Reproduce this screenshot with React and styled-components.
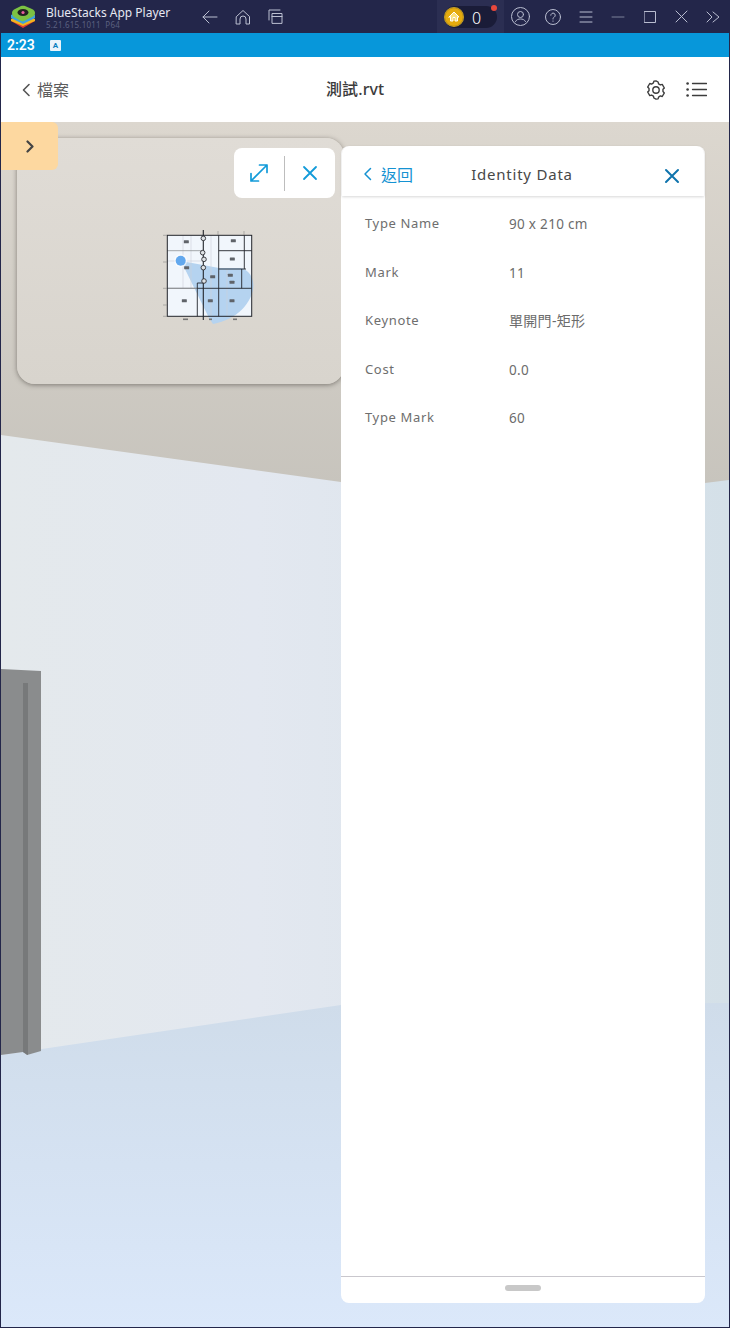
import React from "react";
import styled, { createGlobalStyle } from "styled-components";

const Global = createGlobalStyle`
  html, body { margin: 0; padding: 0; background: #23264a; }
  #root { width: 730px; height: 1328px; }
  * { box-sizing: border-box; }
`;
const sans = `"Noto Sans", "Noto Sans CJK TC", sans-serif`;

const Shell = styled.div`
  width: 730px; height: 1328px; display: flex; flex-direction: column;
  background: #23264a; padding: 0 1px 1px 1px; overflow: hidden; font-family: ${sans};
`;
const TitleBar = styled.header`
  height: 33px; flex: none; display: flex; align-items: center; color: #fff;
`;
const Logo = styled.svg`width: 26px; height: 24px; margin-left: 9px; flex: none;`;
const Brand = styled.div`
  margin-left: 10px; width: 156px; display: flex; flex-direction: column; flex: none;
`;
const BrandName = styled.span`
  font: 12px/14px "Noto Sans", sans-serif; color: #e6e8f2; margin-top: 3px; white-space: nowrap;
`;
const BrandVersion = styled.span`
  font: 8px/10px "Noto Sans", sans-serif; color: #5b6080; letter-spacing: .2px; white-space: pre;
`;
const NavIcons = styled.div`display: flex; gap: 17px; align-items: center; color: #bcc0d2;`;
const Svg = styled.svg`
  flex: none; display: block; fill: none; stroke: currentColor;
  stroke-linecap: round; stroke-linejoin: round;
`;
const CoinWrap = styled.div`
  position: relative; margin-left: 154px; width: 67px; height: 33px; background: #2b2e52;
  display: flex; align-items: center; padding-left: 7px; flex: none;
`;
const CoinPill = styled.div`
  width: 53px; height: 22px; border-radius: 11px; background: #1a1c38;
  display: flex; align-items: center; gap: 8px;
`;
const Coin = styled.div`
  width: 20px; height: 20px; border-radius: 50%; flex: none;
  background: radial-gradient(circle at 50% 50%, #e5ab0e 0 58%, #b98c14 64%, #e8c537 72%, #dcb02a 100%);
  display: flex; align-items: center; justify-content: center;
`;
const CoinCount = styled.span`font: 300 16px/18px "Noto Sans", sans-serif; color: #fff; margin-top: 2px;`;
const RedDot = styled.span`
  position: absolute; top: 5px; left: 54px; width: 6px; height: 6px; border-radius: 50%; background: #e8483c;
`;
const WinIcons = styled.div`
  display: flex; align-items: center; color: #b9bdd0; margin-left: 3px;
`;
const IconCell = styled.div`
  width: ${p => p.$w}px; display: flex; justify-content: center;
`;

const StatusBar = styled.div`
  height: 24px; flex: none; background: #0797da; display: flex; align-items: center;
  padding-left: 6px; gap: 15px; color: #fff;
`;
const Clock = styled.span`font: 600 14px/16px "Roboto", sans-serif;`;
const StatusBadge = styled.span`
  width: 11px; height: 11px; background: #e9f4fb; color: #0a7fc0; border-radius: 1px;
  font: 700 8px/11px "Roboto", sans-serif; text-align: center;
`;

const AppBar = styled.div`
  height: 65px; flex: none; background: #fff; display: grid;
  grid-template-columns: 305px auto 1fr; align-items: center; padding: 0 22px 0 20px;
`;
const Back = styled.div`display: flex; align-items: center; gap: 6px; color: #555;`;
const BackLabel = styled.span`font: 16px/20px "Noto Sans CJK TC", sans-serif; color: #5c5c5c; margin-bottom: 1px;`;
const FileName = styled.h1`
  margin: 0 0 1px; font: 500 16px/20px "Noto Sans", "Noto Sans CJK TC", sans-serif; color: #3c3c3c; letter-spacing: .1px;
`;
const AppTools = styled.div`
  display: flex; justify-content: flex-end; align-items: center; gap: 19px; color: #3c3c3c;
`;

const Viewport = styled.main`position: relative; flex: 1; overflow: hidden;`;
const Scene = styled.svg`position: absolute; inset: 0; width: 100%; height: 100%; display: block;`;

const MiniMap = styled.section`
  position: absolute; left: 16px; top: 16px; width: 327px; height: 246px;
  background: linear-gradient(180deg, #e0dcd6, #d8d4cd);
  border-radius: 6px 18px 18px 18px;
  box-shadow: 0 1px 5px rgba(60,55,50,.55);
`;
const PlanSvg = styled.svg`position: absolute; left: 144px; top: 92px; width: 100px; height: 100px;`;
const SideTab = styled.button`
  position: absolute; left: 0; top: 0; width: 57px; height: 48px; border: 0; padding: 0;
  background: #fdd8a0; border-radius: 0 6px 6px 0; color: #444;
  display: flex; align-items: center; justify-content: center;
`;
const MapTools = styled.div`
  position: absolute; left: 233px; top: 26px; width: 101px; height: 50px; background: #fff;
  border-radius: 8px; display: flex; align-items: center; color: #129bd9;
`;
const MapTool = styled.div`flex: 1; display: flex; align-items: center; justify-content: center;`;
const MapDivider = styled.span`width: 1px; height: 35px; background: #bdbdbd; flex: none;`;

const Panel = styled.aside`
  position: absolute; left: 340px; top: 24px; width: 364px; height: 1157px; background: #fff;
  border-radius: 8px; display: flex; flex-direction: column;
`;
const PanelHead = styled.div`
  height: 50px; flex: none; display: grid; grid-template-columns: 1fr auto 1fr; align-items: center;
  padding: 5px 24px 0 21px; margin: 0 1px; box-shadow: 0 1px 3px rgba(0,0,0,.16); border-radius: 8px 8px 0 0;
`;
const PanelBack = styled.div`display: flex; align-items: center; gap: 9px; color: #1592d2;`;
const PanelBackLabel = styled.span`font: 16px/20px "Noto Sans CJK TC", sans-serif; color: #1592d2;`;
const PanelTitle = styled.h2`
  margin: 0 0 0 1px; font: 400 15px/20px "Noto Sans", sans-serif; color: #484848; letter-spacing: .78px;
`;
const PanelClose = styled.div`display: flex; justify-content: flex-end; color: #0f74ad; margin-top: 5px;`;
const Rows = styled.dl`margin: 0; flex: 1; padding: 17px 0 0 24px; display: flex; flex-direction: column;`;
const Row = styled.div`height: 48.5px; display: grid; grid-template-columns: 144px 1fr;`;
const Key = styled.dt`font: 13px/20px "Noto Sans", sans-serif; color: #6e6e6e; letter-spacing: .65px;`;
const Value = styled.dd`
  margin: 1px 0 0; font: ${p => (p.$cjk ? 14 : 13.5)}px/20px "Noto Sans", "Noto Sans CJK TC", sans-serif;
  color: #6c6c6c; letter-spacing: .3px;
`;
const PanelFoot = styled.div`
  height: 27px; flex: none; border-top: 1px solid #c9c7cd; display: flex; align-items: center; justify-content: center;
`;
const Handle = styled.span`width: 36px; height: 6px; border-radius: 3px; background: #c8c8c8; margin-bottom: 5px;`;

const rows = [
  ["Type Name", "90 x 210 cm"],
  ["Mark", "11"],
  ["Keynote", "單開門-矩形", true],
  ["Cost", "0.0"],
  ["Type Mark", "60"],
];

const labels = [[109, 65], [250, 62], [247, 117], [110, 143], [188, 170], [241, 166], [246, 187], [103, 242], [181, 242], [246, 242]];
const pins = [[160, 55], [158, 98], [162, 118], [160, 143], [162, 183]];
const toPlan = ([x, y]) => [x / 3 - 11, y / 3 - 10];

const Plan = () => (
  <PlanSvg viewBox="0 0 100 100">
    <rect x="6.300" y="5.300" width="84.400" height="81" fill="#f1f6fc" />
    <path d="M20 31 L42 35 L58 38 L80 38 C88 40 92 47 92.500 55 C92 72 76 90 52 94 L48 88 Z" fill="#b5d3f0" />
    <g stroke="#ccd2d8" strokeWidth=".6" fill="none">
      <path d="M6.300 31H42.300M22 5.300V58M30 5.300V58M50 5.300V86M66 39V86" />
    </g>
    <g stroke="#8d9094" fill="none" strokeWidth=".8">
      <path d="M6.300 20.700H42.300" />
      <path d="M6.300 58.300H36.300" strokeWidth="1.300" />
    </g>
    <g stroke="#22252b" fill="none">
      <rect x="6.300" y="5.300" width="84.400" height="81" strokeWidth="1" />
      <path d="M42.300 0V90" strokeWidth="1.100" />
      <path d="M57.700 5.300V86.300M83.300 5.300V39M80.700 39V58.300M57.700 20.700H90.700M57.700 39H85M36.300 58.300H90.700M36.300 53V86.300M36.300 53H42.300" strokeWidth=".9" />
    </g>
    <g fill="#5f6369">
      {labels.map((p, i) => {
        const [x, y] = toPlan(p);
        return <rect key={i} x={x - 2.500} y={y - 1.500} width="5" height="3" rx=".5" />;
      })}
    </g>
    <g fill="#dfe3e6" stroke="#2c2e33" strokeWidth=".9">
      {pins.map((p, i) => {
        const [x, y] = toPlan(p);
        return <circle key={i} cx={x} cy={y} r="2.300" />;
      })}
    </g>
    <g stroke="#8a8a88" strokeWidth=".6" fill="none">
      <path d="M2 5.300H6M2 32H6M2 58.300H6M2 75H6M2 86.300H6M57 1V5M83 1V5" />
    </g>
    <g fill="#777">
      <rect x="22" y="88.500" width="5" height="1.600" /><rect x="48" y="88.500" width="3" height="1.600" /><rect x="72" y="88.500" width="4" height="1.600" />
    </g>
    <circle cx="19.700" cy="30.700" r="6.500" fill="#fff" fillOpacity=".6" />
    <circle cx="19.700" cy="30.700" r="5" fill="#62a8ee" />
  </PlanSvg>
);

export default function App() {
  return (
    <Shell>
      <Global />
      <TitleBar>
        <Logo viewBox="0 0 26 24">
          <path d="M13 11 L25 16 L13 23 L1 16 Z" fill="#e03a33" />
          <path d="M1 14 L13 8 L25 14 L25 16 L13 21 L1 16 Z" fill="#f3b51c" />
          <path d="M1 10 L13 4 L25 10 L25 13 L13 19 L1 13 Z" fill="#3da2dc" />
          <path d="M2 8 C2 6 3 5 5 4 L11 1 C12 .6 14 .6 15 1 L22 4 C24 5 25 6 25 8 C25 10 24 11 22 12 L14 16 C13 16.500 12 16.500 11 16 L4 12 C3 11 2 10 2 8 Z" fill="#7cc243" />
          <ellipse cx="13" cy="7.500" rx="5.500" ry="3.500" fill="#222" />
          <circle cx="13" cy="7.500" r="1.600" fill="#e85d9b" />
        </Logo>
        <Brand>
          <BrandName>BlueStacks App Player</BrandName>
          <BrandVersion>5.21.615.1011  P64</BrandVersion>
        </Brand>
        <NavIcons>
          <Svg width="16" height="16" viewBox="0 0 16 16" strokeWidth="1">
            <path d="M15 8H1M7 2L1 8l6 6" />
          </Svg>
          <Svg width="16" height="16" viewBox="0 0 16 16" strokeWidth="1">
            <path d="M1.500 7.500 8 1.500l6.500 6V15H11V10a3 3 0 0 0-6 0v5H1.500Z" />
          </Svg>
          <Svg width="15" height="15" viewBox="0 0 15 15" strokeWidth="1">
            <path d="M1 11V1h11M4 14V4.500h10V14ZM4 7.500h10" />
          </Svg>
        </NavIcons>
        <CoinWrap>
          <CoinPill>
            <Coin>
              <Svg width="12" height="12" viewBox="0 0 12 12" stroke="none">
                <path fill="#fbe07a" d="M1 6 6 1l5 5H9.500v4H7V6.500H5V10H2.500V6Z" />
              </Svg>
            </Coin>
            <CoinCount>0</CoinCount>
          </CoinPill>
          <RedDot />
        </CoinWrap>
        <WinIcons>
          <IconCell $w={27}>
            <Svg width="19" height="19" viewBox="0 0 19 19" strokeWidth="1">
              <circle cx="9.500" cy="9.500" r="9" />
              <circle cx="9.500" cy="7.500" r="3" />
              <path d="M4.500 14.500c1-2 3-2.500 5-2.500s4 .5 5 2.500" />
            </Svg>
          </IconCell>
          <IconCell $w={37}>
            <Svg width="16" height="16" viewBox="0 0 16 16" strokeWidth="1">
              <circle cx="8" cy="8" r="7.500" />
              <path d="M5.800 6.200a2.200 2.200 0 1 1 3.400 1.900C8.400 8.600 8 9 8 10M8 12v.3" />
            </Svg>
          </IconCell>
          <IconCell $w={29}>
            <Svg width="14" height="12" viewBox="0 0 14 12" strokeWidth="1">
              <path d="M1 1h12M1 6h12M1 11h12" />
            </Svg>
          </IconCell>
          <IconCell $w={35}>
            <Svg width="14" height="12" viewBox="0 0 14 12" strokeWidth="1" color="#7d8199">
              <path d="M1 6h12" />
            </Svg>
          </IconCell>
          <IconCell $w={29}>
            <Svg width="12" height="12" viewBox="0 0 12 12" strokeWidth="1">
              <rect x=".5" y=".5" width="11" height="11" />
            </Svg>
          </IconCell>
          <IconCell $w={35}>
            <Svg width="13" height="13" viewBox="0 0 13 13" strokeWidth="1">
              <path d="M1 1l11 11M12 1 1 12" />
            </Svg>
          </IconCell>
          <IconCell $w={27}>
            <Svg width="14" height="12" viewBox="0 0 14 12" strokeWidth="1">
              <path d="M1 1l5 5-5 5M7 1l6 5-6 5" />
            </Svg>
          </IconCell>
        </WinIcons>
      </TitleBar>

      <StatusBar>
        <Clock>2:23</Clock>
        <StatusBadge>A</StatusBadge>
      </StatusBar>

      <AppBar>
        <Back>
          <Svg width="10" height="14" viewBox="0 0 10 14" strokeWidth="1.600">
            <path d="M8 1.500 2.500 7 8 12.500" />
          </Svg>
          <BackLabel>檔案</BackLabel>
        </Back>
        <FileName>測試.rvt</FileName>
        <AppTools>
          <Svg width="22" height="22" viewBox="0 0 24 24" strokeWidth="1.500">
            <circle cx="12" cy="12" r="3.500" />
            <path d="M12 2l2.300 1.300.5 2 2 1.200 2-.6 2.300 3.900-1.500 1.500v2.400l1.500 1.500-2.300 3.900-2-.6-2 1.200-.5 2L12 22l-2.300-1.300-.5-2-2-1.200-2 .6-2.300-3.900 1.500-1.500v-2.400L2.900 8.800l2.300-3.900 2 .6 2-1.200.5-2Z" />
          </Svg>
          <Svg width="21" height="15" viewBox="0 0 21 15" strokeWidth="1.300">
            <path d="M6.500 1.500H20.500M6.500 7.500H20.500M6.500 13.500H20.500" />
            <circle cx="1.600" cy="1.500" r="1.300" fill="currentColor" stroke="none" />
            <circle cx="1.600" cy="7.500" r="1.300" fill="currentColor" stroke="none" />
            <circle cx="1.600" cy="13.500" r="1.300" fill="currentColor" stroke="none" />
          </Svg>
        </AppTools>
      </AppBar>

      <Viewport>
        <Scene viewBox="0 0 728 1205" preserveAspectRatio="none">
          <defs>
            <linearGradient id="ceil" x1="0" y1="0" x2="0" y2="1">
              <stop offset="0" stopColor="#dcd7cf" />
              <stop offset="1" stopColor="#c5c2bb" />
            </linearGradient>
            <linearGradient id="wall" x1="0" y1="0" x2="1" y2="0">
              <stop offset="0" stopColor="#e4e9ec" />
              <stop offset=".35" stopColor="#e3e8f0" />
              <stop offset="1" stopColor="#d4e0e8" />
            </linearGradient>
            <linearGradient id="floor" x1="0" y1="0" x2="0" y2="1">
              <stop offset="0" stopColor="#cfdcea" />
              <stop offset="1" stopColor="#dbe8fa" />
            </linearGradient>
          </defs>
          <rect width="728" height="400" fill="url(#ceil)" />
          <polygon points="0,313 340,360 704,361 728,358 728,1205 0,1205" fill="url(#wall)" />
          <polygon points="0,933 340,883 728,881 728,1205 0,1205" fill="url(#floor)" />
          <polygon points="0,547 40,549 40,929 26,933 22,930 0,933" fill="#8a8c8d" />
          <polygon points="22,561 27,561 27,933 22,930" fill="#77797a" />
        </Scene>
        <MiniMap><Plan /></MiniMap>
        <SideTab aria-label="展開">
          <Svg width="10" height="13" viewBox="0 0 10 13" strokeWidth="2.200">
            <path d="M2.500 1.500 7.500 6.500 2.500 11.500" />
          </Svg>
        </SideTab>
        <MapTools>
          <MapTool>
            <Svg width="20" height="20" viewBox="0 0 20 20" strokeWidth="1.700">
              <path d="M2 18 18 2M10.500 2H18v7.500M2 10.500V18h7.500" />
            </Svg>
          </MapTool>
          <MapDivider />
          <MapTool>
            <Svg width="16" height="16" viewBox="0 0 16 16" strokeWidth="1.800">
              <path d="M2 2l12 12M14 2 2 14" />
            </Svg>
          </MapTool>
        </MapTools>
        <Panel>
          <PanelHead>
            <PanelBack>
              <Svg width="9" height="14" viewBox="0 0 9 14" strokeWidth="1.500">
                <path d="M7.500 1.500 2 7l5.500 5.500" />
              </Svg>
              <PanelBackLabel>返回</PanelBackLabel>
            </PanelBack>
            <PanelTitle>Identity Data</PanelTitle>
            <PanelClose>
              <Svg width="16" height="16" viewBox="0 0 16 16" strokeWidth="2">
                <path d="M2 2l12 12M14 2 2 14" />
              </Svg>
            </PanelClose>
          </PanelHead>
          <Rows>
            {rows.map(([k, v, cjk]) => (
              <Row key={k}>
                <Key>{k}</Key>
                <Value $cjk={cjk}>{v}</Value>
              </Row>
            ))}
          </Rows>
          <PanelFoot><Handle /></PanelFoot>
        </Panel>
      </Viewport>
    </Shell>
  );
}
